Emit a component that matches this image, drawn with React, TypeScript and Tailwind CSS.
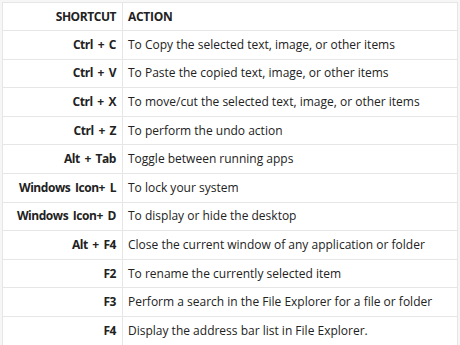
const rows: [string, string][] = [
  ['Ctrl + C', 'To Copy the selected text, image, or other items'],
  ['Ctrl + V', 'To Paste the copied text, image, or other items'],
  ['Ctrl + X', 'To move/cut the selected text, image, or other items'],
  ['Ctrl + Z', 'To perform the undo action'],
  ['Alt + Tab', 'Toggle between running apps'],
  ['Windows Icon+ L', 'To lock your system'],
  ['Windows Icon+ D', 'To display or hide the desktop'],
  ['Alt + F4', 'Close the current window of any application or folder'],
  ['F2', 'To rename the currently selected item'],
  ['F3', 'Perform a search in the File Explorer for a file or folder'],
  ['F4', 'Display the address bar list in File Explorer.'],
]

export default function App() {
  return (
    <div className="h-[345px] w-[460px] overflow-hidden bg-[#f6f6f6] pl-[2px] pt-[2px] font-['Open_Sans',sans-serif] text-[12px] text-[#222]">
      <table className="w-[456px] border-collapse bg-white">
        <thead>
          <tr className="h-[28px]">
            <th className="w-[120px] border border-[#e6e6e6] pr-[6px] text-right font-bold tracking-[-0.45px]">SHORTCUT</th>
            <th className="border border-[#e6e6e6] pl-[5px] text-left font-bold tracking-[-0.3px]">ACTION</th>
          </tr>
        </thead>
        <tbody>
          {rows.map(([k, v]) => (
            <tr key={k} className="h-[28.6px]">
              <td className="border border-[#e6e6e6] pr-[6px] text-right font-bold tracking-[-0.45px] [word-spacing:2px]">{k}</td>
              <td className="border border-[#e6e6e6] pl-[5px]">{v}</td>
            </tr>
          ))}
        </tbody>
      </table>
    </div>
  )
}
